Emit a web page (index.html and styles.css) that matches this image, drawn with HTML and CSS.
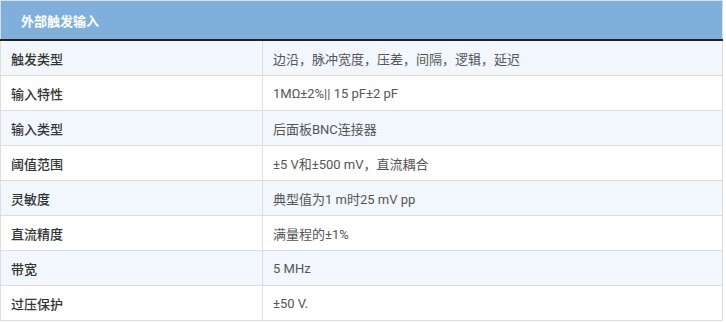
FILE: index.html
```html
<!DOCTYPE html>
<html lang="zh">
<head>
<meta charset="utf-8">
<link rel="stylesheet" href="styles.css">
</head>
<body>
<table class="spec">
  <thead>
    <tr><th colspan="2" class="head">外部触发输入</th></tr>
  </thead>
  <tbody>
    <tr class="odd"><td class="k">触发类型</td><td class="v">边沿，脉冲宽度，压差，间隔，逻辑，延迟</td></tr>
    <tr><td class="k">输入特性</td><td class="v">1MΩ±2%|| 15 pF±2 pF</td></tr>
    <tr class="odd"><td class="k">输入类型</td><td class="v">后面板BNC连接器</td></tr>
    <tr><td class="k">阈值范围</td><td class="v">±5 V和±500 mV，直流耦合</td></tr>
    <tr class="odd"><td class="k">灵敏度</td><td class="v">典型值为1 m时25 mV pp</td></tr>
    <tr><td class="k">直流精度</td><td class="v">满量程的±1%</td></tr>
    <tr class="odd"><td class="k">带宽</td><td class="v">5 MHz</td></tr>
    <tr><td class="k">过压保护</td><td class="v">±50 V.</td></tr>
  </tbody>
</table>
</body>
</html>
```
FILE: styles.css
```css
html, body {
  margin: 0;
  padding: 0;
  background: #fff;
}
.spec {
  width: 723px;
  border-collapse: collapse;
  font-family: Roboto, "Noto Sans CJK SC", sans-serif;
  font-size: 13px;
  color: #555;
  border: 1px solid #ddd;
}
.head {
  background: #7eb0db;
  color: #fff;
  font-weight: bold;
  text-align: left;
  height: 38px;
  padding: 0 0 0 20px;
  border-bottom: 2px solid #222;
}
.spec td {
  height: 34px;
  padding: 0 10px;
  border: 1px solid #ddd;
  vertical-align: middle;
}
.odd td {
  background: #f2f7fd;
}
.k {
  width: 241px;
  color: #333;
  font-weight: 500;
}
.v {
  color: #555;
}
```
